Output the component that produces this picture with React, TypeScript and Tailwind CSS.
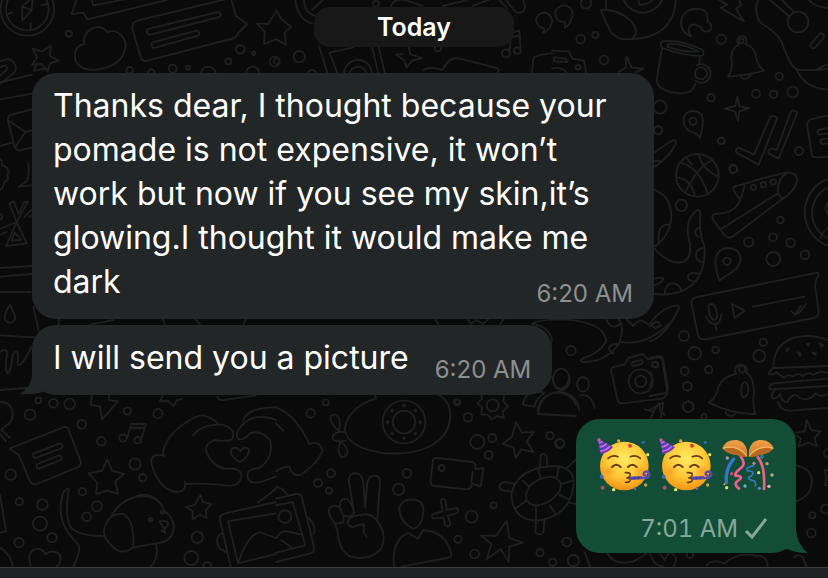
import type { ReactNode } from "react";

type Dot = [number, number, number];

function Dots({ items }: { items: Dot[] }) {
  return (
    <>
      {items.map(([x, y, r]) => (
        <circle key={`${x}-${y}`} cx={x} cy={y} r={r} />
      ))}
    </>
  );
}

/* Doodles are drawn on a grid three times finer than the page. */
function Patch({ x, y, children }: { x: number; y: number; children: ReactNode }) {
  return <g transform={`translate(${x} ${y}) scale(0.33333)`}>{children}</g>;
}

function Wallpaper() {
  return (
    <svg
      aria-hidden="true"
      className="absolute inset-0 h-full w-full"
      viewBox="0 0 828 578"
      preserveAspectRatio="xMidYMid slice"
      fill="none"
      stroke="#1e1f1f"
      strokeWidth="5.5"
      strokeLinecap="round"
      strokeLinejoin="round"
    >
      {/* top left: compass, speech bubbles, cloud, star, paper clip */}
      <Patch x={0} y={0}>
        <circle cx="82" cy="27" r="80" />
        <circle cx="82" cy="27" r="64" />
        <path d="M98-8L66 20L67 62L95 30ZM66 20L95 30M92 70v18M20 44l16-6M124 16l16-4" />
        <path d="M232-10L215 42L250 38L262 58L500 0M275-5L280 16L385-4" />
        <path d="M412 62L692-6L708 48L742 72L716 98L704 114L442 182Q428 186 422 172L398 88Q394 68 412 62Z" />
        <path d="M448 86L654 36A8 8 0 0 1 658 51L452 104A9 9 0 0 1 448 86ZM462 126L590 92A8 8 0 0 1 594 107L466 143A8 8 0 0 1 462 126Z" />
        <path d="M252 132C246 84 304 66 322 97C350 82 386 116 374 150C362 205 270 224 240 198C216 182 220 138 252 132Z" />
        <path d="M98 146L126 154L152 138L150 168L176 182L150 190L144 214L124 192L96 194L112 172Z" />
        <path d="M770 70L804 72L828 36M770 70L794 94L792 132L828 118" />
        <path d="M-10 186L20 178A25 25 0 0 1 38 222L-10 260M-10 206L14 196A8 8 0 0 1 18 210L-10 236M-10 300L100 280" />
        <Dots items={[[207, 101, 9], [721, 148, 13], [761, 160, 5], [685, 184, 9], [518, 206, 12], [564, 203, 6], [389, 211, 10], [454, 218, 10], [625, 222, 22], [758, 220, 20], [824, 185, 15]]} />
      </Patch>

      {/* top centre: phone, sparkle, notes, photo */}
      <Patch x={276} y={0}>
        <path d="M0 30L18 60L46 80L26 98L30 134L0 118M58 0Q66 60 108 70M84 0Q84 38 118 48M108 30L140 0" />
        <path d="M130 140L154 218M160 158L188 228M160 158L232 142M288 140L306 218M308 140L326 218" />
        <circle cx="246" cy="222" r="42" />
        <circle cx="246" cy="226" r="26" />
        <path d="M398 140L402 162L438 174L408 182L392 202L384 180L360 164L378 162M345 20Q356-10 392 2L440 18M500 18L575 0M590 18L650-5M690 0L714 30A12 12 0 0 0 744 10L740-5M670 0L694 26" />
        <path d="M712 96L730 92L734 148M700 156L704 112L732 106" />
        <circle cx="690" cy="160" r="12" />
        <circle cx="724" cy="152" r="10" />
        <path d="M440 212Q456 196 500 210Q520 166 552 176L662 204Q674 210 664 218M768 218L772 176Q776 164 828 160" />
        <path d="M780 62A24 24 0 1 1 826 72Q820 92 800 100Q810 84 800 84Q784 80 780 62Z" />
        <Dots items={[[300, 11, 9], [70, 170, 17], [2, 184, 9], [486, 144, 10], [108, 222, 12]]} />
      </Patch>

      {/* top right: coffee, croissant, mug, bell, guitar, ticks */}
      <Patch x={552} y={0}>
        <path d="M10 45A26 26 0 1 1 58 56Q54 76 38 84Q44 66 34 66Q14 64 10 45Z" />
        <path d="M162-10V28M372-10Q370 112 238 118M210-10Q230 40 280 38Q322 30 334-10M258-8L262 14Q290 16 306-6" />
        <path d="M146 30Q192 24 236 62Q264 94 242 116Q198 126 174 92Q158 58 146 30Z" />
        <path d="M418 110C366 88 386 26 432 27Q470 24 466 62Q486 78 474 92Q452 100 446 82Q420 62 410 86Q408 98 418 110Z" />
        <path d="M502 0L526 14L506 24L576 64L552 28L568 14L556-8" />
        <path d="M620-6Q602 42 628 70Q676 98 690 128Q712 194 734 208Q780 214 828 206M650-4L710 48M686-4L728 38M734 208Q758 266 828 268M794 208L828 192M766-5Q784 20 828 24" />
        <circle cx="738" cy="66" r="31" />
        <path d="M778 130L802 102A9 9 0 0 1 815 114L790 142A8 8 0 0 1 778 130Z" />
        <path d="M330 124Q390 118 452 150Q460 168 444 168Q388 166 332 144Q322 136 330 124ZM348 132Q392 130 440 154Q394 158 346 140ZM330 146L314 238Q316 276 388 280Q424 280 430 250M444 168L441 194" />
        <path d="M434 196A28 28 0 1 1 430 242" />
        <circle cx="447" cy="220" r="18" />
        <path d="M528 230Q544 206 538 170Q540 140 562 134A14 14 0 1 1 580 132Q612 144 612 172Q618 200 636 212Q590 226 528 230ZM566 230Q580 246 598 224" />
        <circle cx="568" cy="123" r="7" />
        <path d="M556 290L562 320L592 324L562 334L558 362L548 334L518 326L550 318ZM224 170L238 202L274 206L250 218M222 172V202L200 216" />
        <path d="M444 414Q438 400 414 394C384 376 390 332 424 333C458 334 458 362 444 414Z" />
        <circle cx="423" cy="364" r="11" />
        <path d="M553 458Q548 448 560 443L606 464L654 352Q664 344 676 354L620 494ZM650 460Q646 446 662 446L674 450L716 336Q726 326 736 338L680 476Z" />
        <path d="M828 346L776 358Q764 364 766 380L780 466Q784 476 828 470M828 384L800 390A8 8 0 0 0 804 404L828 400M828 416L808 418A8 8 0 0 0 812 432L828 430" />
        <circle cx="436" cy="526" r="64" />
        <path d="M385 488Q440 500 468 582M376 532Q420 540 428 588M400 578Q436 500 480 480M440 464Q454 510 498 530M402 472L420 494" />
        <path d="M306 458L356 424Q370 416 372 426Q364 460 306 502M306 484Q320 480 326 486M0 152L50 154L62 176L96 182L102 218M6 172L42 176L46 186L6 184ZM0 206Q26 198 44 218" />
        <Dots items={[[102, 10, 16], [86, 117, 13], [130, 105, 9], [156, 180, 13], [78, 202, 7], [508, 118, 14], [682, 229, 11], [612, 281, 12], [665, 283, 11], [722, 276, 16], [477, 293, 11], [324, 321, 20], [318, 390, 12], [508, 422, 10], [741, 453, 12], [544, 507, 11]]} />
      </Patch>

      {/* right edge: shoe, octopus arm, voice note, burger, bell */}
      <Patch x={650} y={110}>
        <path d="M256 228L276 224Q350 200 410 188Q448 188 440 218Q430 246 396 268L250 378Q236 388 224 376L190 330Q182 312 196 312Q246 310 262 286Q276 262 284 224M212 358L384 250L398 268M384 250Q380 206 410 190M268 266Q254 250 250 236Q250 228 258 228" />
        <Dots items={[[310, 232, 8], [340, 224, 8], [370, 216, 8]]} />
        <path d="M534 206A108 108 0 0 0 534 408M534 232A86 86 0 0 0 534 386M534 278Q520 292 534 312M534 354Q516 366 512 384" />
        <path d="M10 238Q66 258 64 322Q60 380 12 410M26 394Q22 340 58 344M12 414Q60 470 104 454Q124 442 120 402Q98 330 142 300Q154 296 150 322Q148 378 162 404Q172 478 128 524Q86 560 12 552M144 354A14 14 0 0 0 146 380M158 414Q136 420 138 438Q144 460 162 456M140 514Q112 516 114 498Q120 484 148 492M44 552Q46 520 66 520Q88 520 94 542M12 506Q40 500 40 506Q36 520 12 526" />
        <path d="M208 512C190 460 190 418 232 414C276 414 284 458 250 484Q230 496 208 512Z" />
        <circle cx="231" cy="454" r="11" />
        <path d="M136 562L502 488Q508 490 504 498Q490 520 498 544L506 606Q506 620 490 624L166 688Q148 690 144 676L124 580Q124 566 136 562Z" />
        <path d="M176 592Q174 582 186 582Q198 584 202 618Q200 632 188 628Q178 624 176 592ZM168 620Q180 644 196 642Q212 640 214 612M196 642L200 660M246 582L284 602L254 624ZM308 590L462 560M424 604L436 614L452 588M438 612L446 610L468 582" />
        <path d="M0 640Q40 588 82 586Q92 588 82 604Q44 680 0 694M6 640Q14 666 30 644" />
        <path d="M370 770Q374 680 470 678Q510 678 540 694M370 774L534 768M370 774Q352 786 358 794Q374 794 378 786Q392 796 402 804Q416 790 428 800Q444 786 458 798Q474 784 490 794Q510 780 534 790M534 806L370 820Q354 826 360 838L534 828M376 838Q360 854 368 866Q386 864 390 852Q394 876 412 876Q432 842 450 864Q480 876 496 850Q516 866 534 850M384 876Q390 902 420 902L534 894" />
        <path d="M408 718l8-2-6 8zM442 726l10 4-2 8zM470 702l8-2-3 8zM488 728l10 2-2 4zM508 700l12 6-6 4z" />
        <path d="M176 878Q200 864 206 828Q226 796 258 792A18 18 0 1 1 290 788Q318 808 310 868Q310 900 316 912Q250 914 176 878ZM226 898Q226 918 242 918Q254 918 256 908M276 824Q284 808 294 826Q300 856 280 862Q270 856 276 824Z" />
        <circle cx="276" cy="778" r="10" />
        <path d="M0 744L26 738Q40 740 40 754L54 830Q54 846 42 850L0 858M0 786Q14 806 0 826M0 898L40 878L32 924M438 968L464 964L470 930L484 960L512 964L494 984L500 1008L474 998L446 1010L452 984L438 976M438 1066Q486 1076 486 1116Q482 1160 438 1174M534 1080L524 1080L530 1104L524 1126H534" />
        <path d="M170 1365Q188 1346 224 1360Q266 1324 318 1338A28 28 0 0 1 352 1372M432 1342A16 16 0 0 1 458 1342L470 1370M0 1332Q10 1366 40 1370M30 1332L44 1350L56 1330" />
        <Dots items={[[214, 93, 10], [250, 177, 12], [94, 286, 17], [24, 62, 12], [391, 330, 10], [296, 396, 14], [369, 382, 12], [422, 398, 13], [465, 434, 13], [370, 447, 21], [102, 678, 15], [134, 730, 19], [197, 720, 10], [340, 697, 11], [328, 738, 18], [104, 783, 12], [176, 779, 11], [112, 829, 13], [115, 890, 16], [162, 920, 8], [536, 1030, 14], [526, 1197, 13], [487, 1216, 9], [484, 1269, 13], [16, 764, 9], [120, 1334, 10]]} />
      </Patch>

      {/* left edge: envelope, gear, pinwheel */}
      <Patch x={0} y={60}>
        <path d="M96 148L34 164Q22 168 24 182L44 260Q50 274 64 270L96 262M24 180L76 216L96 212M76 216L44 264M0 258L36 248M0 296Q8 302 6 316L20 322Q30 338 22 346L24 358Q10 364 8 384L0 390M84 310Q90 342 80 364L56 380L96 376M28 430L50 486L0 506M28 430L42 424L56 462L72 426L84 424L50 486L80 550L18 558L50 486M44 518L34 542L64 540ZM74 470L94 450M88 470L98 464M0 524L20 516M0 624L96 618M0 650L96 642M0 696H92M0 826L104 832M100 740L116 812" />
        <path d="M30 734Q12 760 14 776Q22 792 38 786Q50 778 44 764ZM0 876Q20 862 22 880Q12 926 22 940Q34 934 38 886Q48 866 54 880V914Q64 922 94 862M0 990L80 984M110 10L102 32L140 26M96 44Q-4 70-10 66" />
        <Dots items={[[-2, 470, 8]]} />
      </Patch>

      {/* bottom left: chat card, notes, heart hands, dog */}
      <Patch x={0} y={300}>
        <path d="M0 306Q36 304 38 344Q36 370 18 376L4 390L30 414M0 402L18 424M176 56V76M270 74L340 60M488 56L494 74M584 56L602 76M730 76L738 56" />
        <path d="M28 446L190 382Q202 378 206 390L242 484Q246 496 232 502L112 552Q98 556 90 544L56 464Z" />
        <path d="M102 460L180 430A8 8 0 0 1 184 445L106 474A8 8 0 0 1 102 460ZM112 492L178 466A8 8 0 0 1 182 480L118 506A8 8 0 0 1 112 492Z" />
        <path d="M276 286L272 314L300 320L306 358L354 304L326 300L328 286M488 288L480 304L504 302L520 320L530 302L546 296M652 290Q656 302 670 300L768 286" />
        <path d="M382 412L394 372L438 372L424 418M390 384L434 384" />
        <circle cx="369" cy="414" r="11" />
        <circle cx="413" cy="421" r="10" />
        <path d="M322 478L336 512L372 522L346 544L354 582L322 572L288 582L292 548L266 520L306 512Z" />
        <path d="M602 584L608 606L634 612L618 630L620 654L600 644L578 658L578 634L558 622L584 614Z" />
        <path d="M488 466Q490 428 526 392Q584 344 608 346Q640 352 656 374M580 406Q604 372 666 374Q712 386 696 418Q680 426 642 420Q618 430 618 450Q628 492 672 506Q726 502 724 528Q720 562 678 556Q610 548 556 552M494 468Q452 456 454 490Q474 566 526 576Q562 576 554 544" />
        <path d="M728 364Q740 322 828 322M828 360Q760 334 722 380Q702 406 716 418Q738 418 750 400Q782 388 810 420Q824 472 778 504Q734 506 744 536Q756 558 800 540L828 530M720 486Q682 464 696 446Q710 438 720 454Q732 438 746 446Q750 470 720 486Z" />
        <path d="M206 566Q190 564 184 600Q170 672 234 732Q246 744 220 800M206 566Q190 680 226 692Q250 708 312 708M332 652Q366 590 430 588Q480 590 492 632Q518 650 522 680Q518 726 470 730L400 742M312 690Q324 638 368 642Q404 654 400 742Q364 770 334 736Q310 712 312 690ZM410 588Q450 574 482 610M478 664Q506 660 504 672Q498 690 488 680ZM484 692L496 698M492 684L496 698M468 734Q478 772 452 800" />
        <circle cx="452" cy="659" r="5" />
        <circle cx="487" cy="636" r="5" />
        <path d="M92 798Q80 760 102 748Q126 742 136 762Q160 746 180 764Q184 790 170 800M0 584L18 694L0 698M0 742Q34 766 38 798M774 608L828 566M828 606L676 640Q656 644 660 660L692 800M828 640L684 664L714 790L828 762M716 786Q740 710 778 696L828 714M664 700Q640 720 660 746L678 756" />
        <Dots items={[[115, 301, 9], [160, 310, 13], [209, 312, 16], [90, 344, 16], [382, 333, 11], [474, 341, 14], [245, 373, 13], [304, 424, 13], [405, 492, 17], [428, 533, 11], [32, 524, 16], [247, 575, 11], [58, 605, 11], [127, 614, 16], [291, 619, 15], [260, 650, 13], [120, 671, 21], [156, 713, 14], [57, 728, 14], [592, 712, 17], [574, 774, 21], [622, 798, 12]]} />
      </Patch>

      {/* bottom centre: submarine, peace sign, video camera, turtle */}
      <Patch x={276} y={380}>
        <path d="M300 55Q214 84 206 148Q216 206 330 220Q420 224 470 194Q530 158 522 90Q514 54 480 40" />
        <circle cx="384" cy="126" r="64" />
        <circle cx="384" cy="126" r="34" />
        <path strokeWidth="10" strokeDasharray="1 37" d="M384 77A49 49 0 1 1 383 77" />
        <path d="M206 156Q168 154 170 176Q176 188 208 182M190 154Q160 130 164 108Q182 96 190 118Q194 136 190 154ZM194 184Q180 214 196 232Q214 230 214 212Q210 198 194 184ZM294 40L300 54" />
        <path d="M0 82Q60 104 100 192Q128 180 140 210Q128 248 78 282Q50 294 40 260Q16 262 0 274M0 130L22 152" />
        <path d="M0 356L60 342Q74 340 78 354L114 502Q118 514 104 520L0 546M0 376L50 366L88 496L0 518M0 474Q20 446 42 456L78 464M16 480L52 506M0 320Q20 324 34 344M98 414Q124 440 112 464" />
        <circle cx="27" cy="410" r="19" />
        <path d="M234 398L218 300Q222 276 244 280Q260 286 262 310L268 382L274 306Q282 282 304 288Q316 298 310 330L304 424Q336 464 314 508Q280 544 224 530Q188 512 186 460L176 430Q154 402 160 384Q178 370 190 382Q206 404 202 426Q190 432 176 430M192 380Q190 358 208 356Q226 360 234 398Q226 416 202 406M304 424Q286 398 258 404Q212 408 216 432Q226 448 244 436L264 432L262 454L272 472" />
        <path d="M484 234L588 246Q600 248 598 268L622 264L614 320L588 310Q588 328 572 328L476 318Q462 316 464 300L470 246Q472 232 484 234ZM590 276L586 306" />
        <circle cx="497" cy="264" r="9" />
        <path d="M494 360Q504 352 508 362L512 390L542 384Q552 392 542 400L516 408L524 434Q516 444 508 436L502 412L474 416Q462 410 472 402L500 394Z" />
        <path d="M404 358Q446 358 442 396Q436 444 410 446Q370 424 370 384Q376 360 404 358ZM354 560Q346 482 396 458L426 476L442 450Q512 456 526 524Q526 532 512 534L376 560" />
        <path d="M720 126L738 158L774 156L752 184L772 216L736 208L720 234L712 202L680 192L708 170ZM692 422L700 474L740 488L700 500L698 546L674 506L632 538L646 492L614 466L660 468Z" />
        <path d="M616 44L618 56L604 70L618 82L616 104L634 104L648 118L662 108L684 114L680 94L696 80L682 64L684 46" />
        <circle cx="650" cy="76" r="18" />
        <path d="M828-10Q834 24 852 26Q874 24 880-8M786 102Q794 38 848 38Q892 44 900 76M786 102L900 108M740 74Q748 30 800 36M740 74L776 80Q778 56 806 38" />
        <path d="M706 344Q722 260 840 258Q900 264 892 320Q880 410 784 422Q710 420 706 344ZM750 346Q758 298 826 290Q866 300 850 334Q820 376 776 376Q748 370 750 346ZM740 302L758 318M788 268L794 296M848 262L842 292M890 302L856 312M850 344L882 360M822 376L840 404M780 378V420M750 362L718 386M706 334Q670 334 670 318Q676 298 716 312M792 264L794 226Q802 216 812 228L814 262M780 422L778 456Q790 470 802 458L806 416M870 266L900 238M880 368L900 372" />
        <Dots items={[[149, 67, 9], [104, 100, 13], [543, 67, 9], [576, 112, 13], [165, 280, 12], [126, 309, 12], [159, 332, 9], [393, 280, 13], [368, 328, 17], [604, 186, 21], [649, 174, 12], [638, 225, 12], [822, 167, 11], [851, 190, 14], [653, 376, 9], [587, 410, 18], [546, 478, 11], [596, 522, 13], [873, 486, 13], [792, 518, 11], [830, 547, 11], [892, 542, 17]]} />
      </Patch>

      {/* beside the second message: people, camera, banana */}
      <Patch x={400} y={270}>
        <path d="M396 162Q410 148 500 148Q620 160 618 216Q596 250 556 262Q534 270 548 276Q616 278 656 222Q676 176 656 148M396 162Q440 166 456 206L450 238M618 148Q636 184 660 162M640 250Q616 236 636 224Q648 220 656 224M664 216Q740 228 808 160M680 148L700 168Q720 140 740 160L752 170Q770 142 784 168" />
        <path d="M644 290L674 284L684 264L728 252L744 268L776 262Q786 262 788 274L802 366Q800 382 786 386L668 400Q656 402 652 388L634 304Q632 294 644 290ZM698 276L726 270Q732 276 724 282L700 288Q690 286 698 276Z" />
        <circle cx="722" cy="334" r="36" />
        <circle cx="722" cy="334" r="17" />
        <ellipse cx="484" cy="328" rx="25" ry="32" />
        <ellipse cx="549" cy="343" rx="18" ry="22" />
        <path d="M412 420Q426 366 484 366Q532 376 538 420M540 376Q574 370 584 414M106 148L116 164M204 148L212 162L230 150L248 162L264 148M300 164L310 148" />
        <Dots items={[[513, 242, 14], [765, 283, 8], [172, 396, 8]]} />
      </Patch>
      <Patch x={560} y={400}>
        <path d="M254 28L280 34L298 10L302 34L314 44M272 54L280 36M74 456L90 500M140 456Q160 500 220 484Q250 470 262 456M330 456Q360 470 340 500" />
        <Dots items={[[384, 20, 16], [20, 426, 13], [40, 482, 17], [0, 130, 12]]} />
      </Patch>
    </svg>
  );
}

function PartyFace() {
  return (
    <svg role="img" aria-label="Partying face" className="h-[54px] w-[54px]" viewBox="110 114 162 162" fill="none">
      <defs>
        <radialGradient id="face" cx="0.5" cy="0.35" r="0.68">
          <stop offset="0" stopColor="#ffea62" />
          <stop offset="0.55" stopColor="#fdc936" />
          <stop offset="0.85" stopColor="#f7a21f" />
          <stop offset="1" stopColor="#e88912" />
        </radialGradient>
        <radialGradient id="blush">
          <stop offset="0" stopColor="#f4861f" stopOpacity="0.5" />
          <stop offset="1" stopColor="#f4861f" stopOpacity="0" />
        </radialGradient>
      </defs>
      <circle cx="192" cy="198" r="73" fill="url(#face)" />
      <ellipse cx="144" cy="213" rx="25" ry="18" fill="url(#blush)" />
      <ellipse cx="239" cy="213" rx="22" ry="18" fill="url(#blush)" />
      <path d="M112 117L158 141Q147 157 121 163Z" fill="#6c38bd" />
      <path d="M116 129Q121 128 127 124M118 141Q130 140 139 131M120 154Q138 151 149 138" stroke="#cf68d8" strokeWidth="5" />
      <path d="M117 135Q125 134 133 128M119 148Q136 145 145 134" stroke="#4149bb" strokeWidth="4" />
      <g stroke="#6b3a08" strokeWidth="5" strokeLinecap="round">
        <path d="M143 175Q156 163 173 170M210 170Q228 163 240 175" />
        <path d="M155 201Q168 187 181 201M203 201Q216 187 229 201" strokeWidth="6" />
        <path d="M195 218Q214 217 209 227Q207 233 198 234Q214 234 209 243Q205 248 196 247" />
      </g>
      <path d="M205 230L244 228L248 238L209 240Z" fill="#5847ad" />
      <path d="M242 233Q267 237 267 222Q264 211 253 216Q245 224 255 226" stroke="#5b4bb4" strokeWidth="7" strokeLinecap="round" />
      <path d="M222 230v8M234 230v8" stroke="#343384" strokeWidth="3" />
      <circle cx="116" cy="120" r="5" fill="#d05aa8" />
      <circle cx="175" cy="123" r="5" fill="#e6a43c" />
      <circle cx="209" cy="137" r="6" fill="#df3839" />
      <circle cx="249" cy="127" r="5" fill="#2e6aa5" />
      <circle cx="262" cy="164" r="5" fill="#d8e568" />
      <circle cx="124" cy="230" r="6" fill="#416bb0" />
      <circle cx="127" cy="263" r="6" fill="#b44e66" />
      <circle cx="160" cy="269" r="5" fill="#efe75a" />
      <circle cx="224" cy="266" r="4" fill="#586bb5" />
      <circle cx="256" cy="255" r="5" fill="#c5a450" />
    </svg>
  );
}

function ConfettiBall() {
  return (
    <svg role="img" aria-label="Confetti ball" className="h-[54px] w-[54px]" viewBox="484 114 162 162" fill="none">
      <defs>
        <linearGradient id="shell" x1="0" y1="0" x2="0" y2="1">
          <stop offset="0" stopColor="#f0a04a" />
          <stop offset="1" stopColor="#d07a2a" />
        </linearGradient>
      </defs>
      <g strokeLinecap="round">
        <path d="M522 177Q496 207 500 248" stroke="#2f78cf" strokeWidth="10" />
        <path d="M543 170Q559 190 546 202Q522 220 528 227Q556 229 534 243Q520 252 538 266" stroke="#e86291" strokeWidth="8" />
        <path d="M582 197Q553 204 564 212Q588 214 576 227Q557 235 577 241Q591 242 587 258" stroke="#347bbf" strokeWidth="5" />
        <path d="M594 171Q617 197 613 267" stroke="#df6882" strokeWidth="8" />
      </g>
      <path d="M488 145Q498 118 532 120Q564 126 564 171Q546 171 534 166Q502 162 488 145Z" fill="url(#shell)" />
      <path d="M642 145Q632 118 598 120Q566 126 566 171Q584 171 596 166Q628 162 642 145Z" fill="url(#shell)" />
      <path d="M488 145Q508 136 532 143Q556 152 564 171Q546 171 534 166Q502 162 488 145ZM642 145Q622 136 598 143Q574 152 566 171Q584 171 596 166Q628 162 642 145Z" fill="#b9691f" />
      <path d="M490 145Q510 138 531 145Q552 153 561 168M640 145Q620 138 599 145Q578 153 569 168" stroke="#f6b868" strokeWidth="4" />
      <path d="M565 140V172" stroke="#144d37" strokeWidth="4" />
      <circle cx="503" cy="174" r="5" fill="#b896ac" />
      <circle cx="516" cy="221" r="5" fill="#c94b64" />
      <circle cx="501" cy="263" r="5" fill="#d5e773" />
      <circle cx="494" cy="253" r="3" fill="#eaad56" />
      <circle cx="556" cy="258" r="5" fill="#6daac6" />
      <circle cx="583" cy="190" r="5" fill="#b78390" />
      <circle cx="597" cy="218" r="5" fill="#e6e275" />
      <circle cx="622" cy="191" r="5" fill="#b7a071" />
      <circle cx="637" cy="225" r="5" fill="#c2af87" />
      <circle cx="628" cy="259" r="5" fill="#ddb9b8" />
      <circle cx="599" cy="265" r="5" fill="#4a8ebc" />
      <circle cx="607" cy="170" r="6" fill="#2779ab" />
    </svg>
  );
}

export default function App() {
  return (
    <div className="relative flex min-h-screen flex-col overflow-hidden bg-[#0a0a0a] font-['Inter',sans-serif] text-white">
      <Wallpaper />

      <main className="relative flex flex-1 flex-col px-8 pt-[7px] pb-[14px]">
        <h1 className="mb-[26px] w-[200px] self-center rounded-2xl bg-[#181818] text-center text-[25px] leading-[40px] font-semibold">
          Today
        </h1>

        <article className="max-w-[622px] self-start rounded-3xl bg-[#232627] px-[21px] py-[11px]">
          <p className="flow-root text-[32px] leading-[44px]">
            Thanks dear, I thought because your pomade is not expensive, it won’t work but now if you see my skin,it’s
            glowing.I thought it would make me dark
            <time className="float-right mt-5 text-[24px] leading-[28px] text-[#8d8f90]">6:20 AM</time>
          </p>
        </article>

        <article className="relative mt-[6px] flex h-[70px] items-end gap-[26px] self-start rounded-3xl bg-[#232627] px-[21px] pb-[11px]">
          <svg aria-hidden="true" className="absolute bottom-0 -left-3 h-9 w-9" viewBox="0 0 36 36" fill="#232627">
            <path d="M12 0V17Q11 28 0 35Q15 36 25 32L36 35V0Z" />
          </svg>
          <p className="relative pb-1 text-[32px] leading-[44px]">I will send you a picture</p>
          <time className="relative text-[24px] leading-[28px] text-[#8d8f90]">6:20 AM</time>
        </article>

        <article className="relative mt-6 flex w-[220px] flex-col self-end rounded-3xl bg-[#144d37] px-[21px] pt-[19px] pb-[10px]">
          <svg aria-hidden="true" className="absolute -right-3 bottom-0 h-9 w-9" viewBox="0 0 36 36" fill="#144d37">
            <path d="M24 0V12Q25 28 36 36Q22 36 16 32L0 35V0Z" />
          </svg>
          <div className="flex gap-2">
            <PartyFace />
            <PartyFace />
            <ConfettiBall />
          </div>
          <div className="relative mt-[23px] flex items-center justify-end gap-[6px] pr-[7px]">
            <time className="text-[24px] leading-[28px] text-[#85a99a] tabular-nums">7:01 AM</time>
            <svg role="img" aria-label="Sent" className="h-6 w-6" viewBox="0 0 24 24" fill="none" stroke="#85a99a" strokeWidth="3">
              <path d="M2 14L8 20L22 2" />
            </svg>
          </div>
        </article>
      </main>

      <footer className="relative h-[11px] border-t border-[#3a3c3d] bg-[#202324]" />
    </div>
  );
}
